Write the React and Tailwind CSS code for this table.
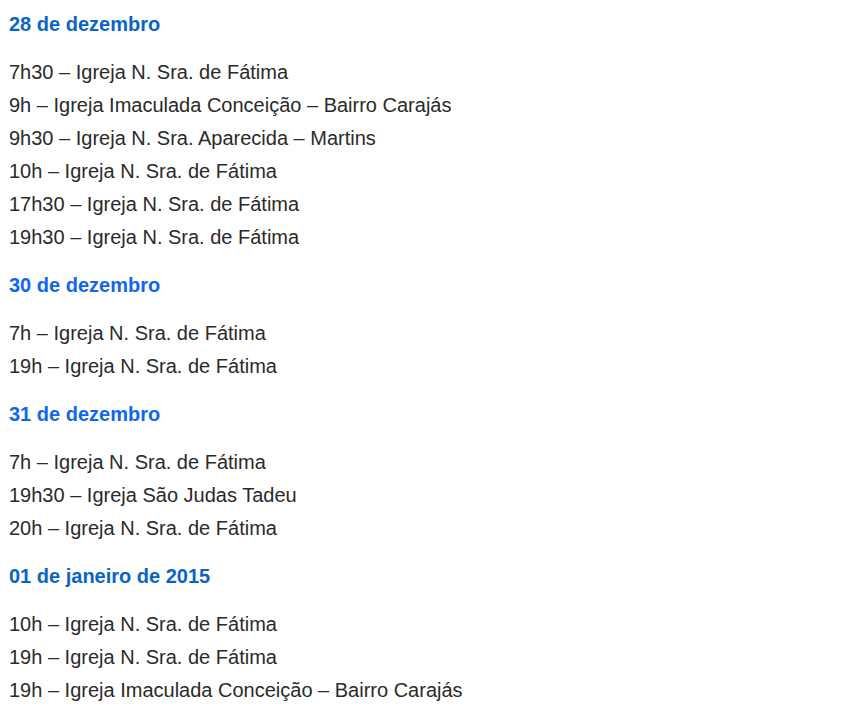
import React from "react";

const schedule = [
  {
    title: "28 de dezembro",
    color: "text-[#0a64c8]",
    items: [
      "7h30 – Igreja N. Sra. de Fátima",
      "9h – Igreja Imaculada Conceição – Bairro Carajás",
      "9h30 – Igreja N. Sra. Aparecida – Martins",
      "10h – Igreja N. Sra. de Fátima",
      "17h30 – Igreja N. Sra. de Fátima",
      "19h30 – Igreja N. Sra. de Fátima",
    ],
  },
  {
    title: "30 de dezembro",
    color: "text-[#1166ee]",
    items: ["7h – Igreja N. Sra. de Fátima", "19h – Igreja N. Sra. de Fátima"],
  },
  {
    title: "31 de dezembro",
    color: "text-[#1166ee]",
    items: [
      "7h – Igreja N. Sra. de Fátima",
      "19h30 – Igreja São Judas Tadeu",
      "20h – Igreja N. Sra. de Fátima",
    ],
  },
  {
    title: "01 de janeiro de 2015",
    color: "text-[#0a64c8]",
    items: [
      "10h – Igreja N. Sra. de Fátima",
      "19h – Igreja N. Sra. de Fátima",
      "19h – Igreja Imaculada Conceição – Bairro Carajás",
    ],
  },
];

export default function App() {
  return (
    <div
      className="min-h-screen bg-white pl-[9px] pt-2 text-[20px] leading-[33px] text-[#2a2a2a]"
      style={{ fontFamily: "'Liberation Sans', Arial, sans-serif" }}
    >
      {schedule.map((day) => (
        <section key={day.title}>
          <h3 className={`mb-[15px] font-bold ${day.color}`}>{day.title}</h3>
          <div className="mb-[15px]">
            {day.items.map((item, i) => (
              <div key={i}>{item}</div>
            ))}
          </div>
        </section>
      ))}
    </div>
  );
}
